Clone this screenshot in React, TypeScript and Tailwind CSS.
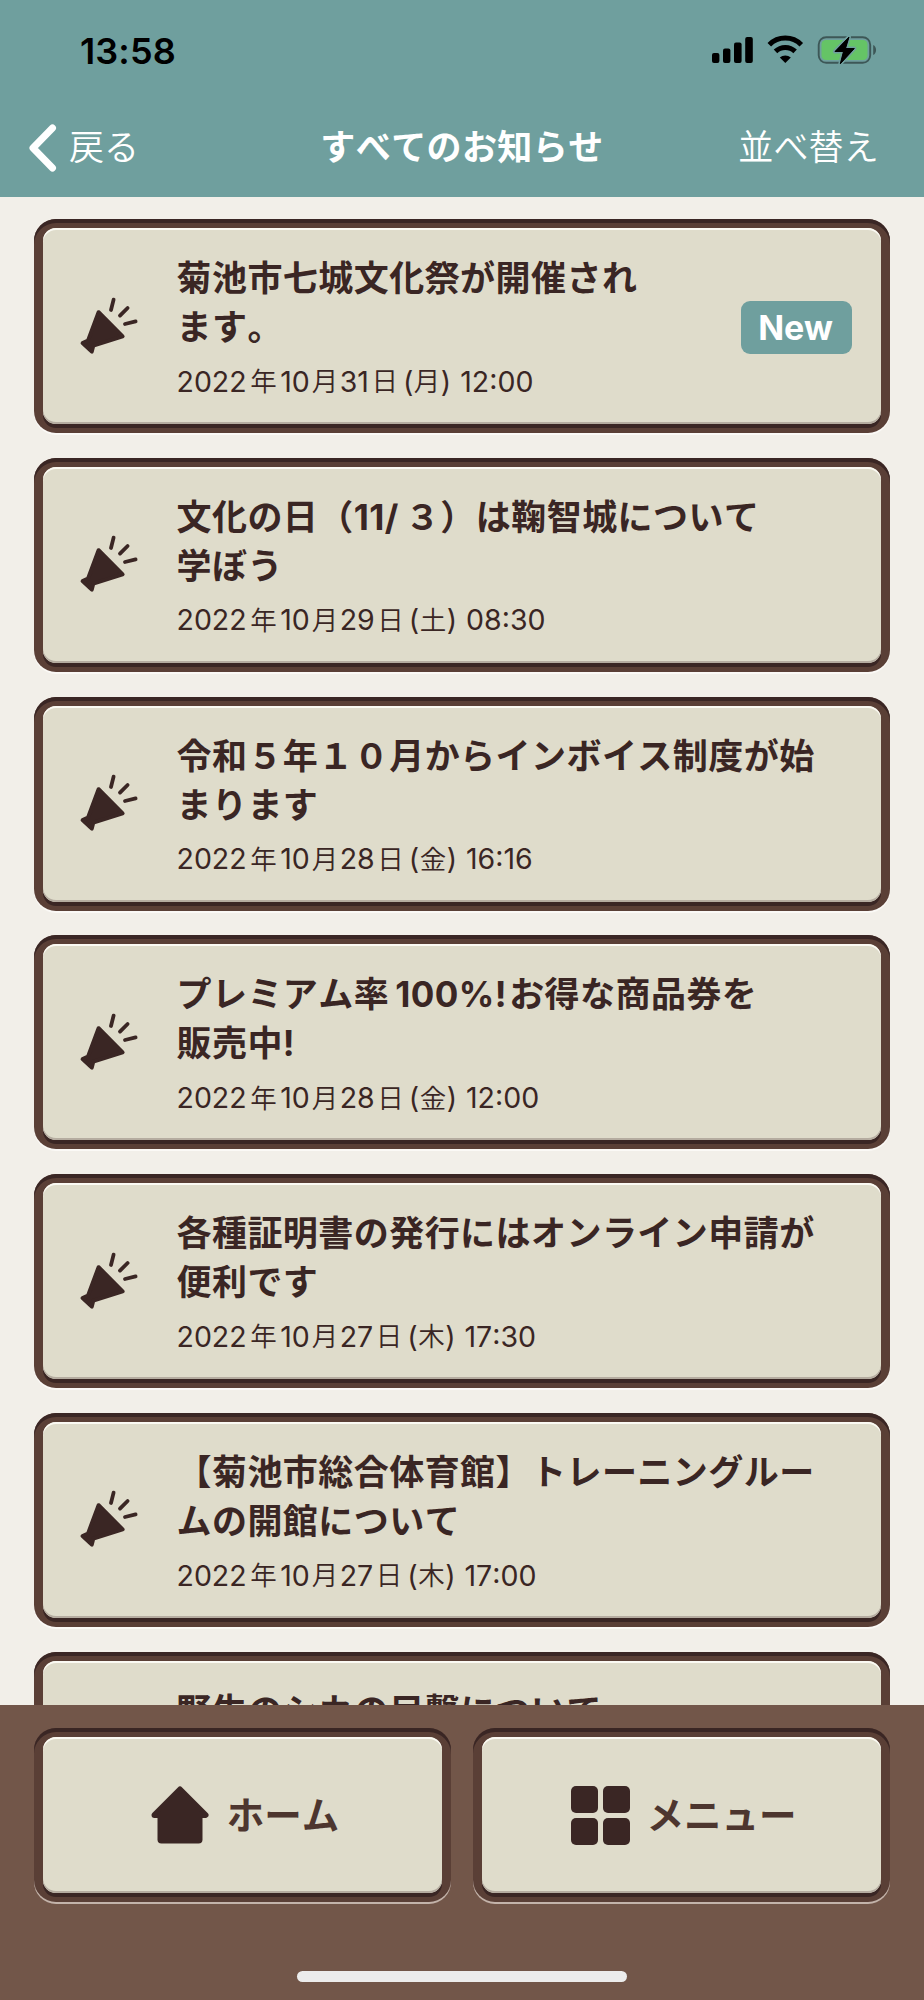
import React from 'react';

interface Notice {
  id: number;
  lines: React.ReactNode[];
  day: string;
  weekday: string;
  time: string;
  isNew?: boolean;
}

const notices: Notice[] = [
  { id: 1, lines: ['菊池市七城文化祭が開催され', 'ます。'], day: '31', weekday: '月', time: '12:00', isNew: true },
  {
    id: 2,
    lines: [<>文化の日（11/<span className="ml-[6px]">３</span>）は鞠智城について</>, '学ぼう'],
    day: '29',
    weekday: '土',
    time: '08:30',
  },
  { id: 3, lines: ['令和５年１０月からインボイス制度が始', 'まります'], day: '28', weekday: '金', time: '16:16' },
  {
    id: 4,
    lines: [<>プレミアム率<span className="mr-[2px] ml-[6px]">100%!</span>お得な商品券を</>, '販売中!'],
    day: '28',
    weekday: '金',
    time: '12:00',
  },
  { id: 5, lines: ['各種証明書の発行にはオンライン申請が', '便利です'], day: '27', weekday: '木', time: '17:30' },
  { id: 6, lines: ['【菊池市総合体育館】トレーニングルー', 'ムの開館について'], day: '27', weekday: '木', time: '17:00' },
  { id: 7, lines: ['野生のシカの目撃について'], day: '26', weekday: '水', time: '12:00' },
];

const StatusBar: React.FC = () => (
  <div className="flex h-[100px] items-center justify-between pr-[46px] pl-[80px] text-black">
    <span className="mt-[2px] text-[36px] leading-none font-semibold tracking-[0.1px]">13:58</span>
    <svg width="167" height="30" viewBox="0 0 167 30">
      <rect x="1" y="18" width="7.4" height="10" rx="2" />
      <rect x="12" y="13.5" width="7.4" height="14.5" rx="2" />
      <rect x="23" y="7.5" width="7.6" height="20.5" rx="2" />
      <rect x="34.2" y="2" width="7.6" height="26" rx="2" />
      <g fill="none" stroke="#000" strokeWidth="5">
        <path d="M58.3 9.8 A22.5 22.5 0 0 1 90.3 9.8" />
        <path d="M64.5 16.4 A14 14 0 0 1 84.1 16.4" />
      </g>
      <path d="M74.3 28 L68.8 22.6 A8 8 0 0 1 79.8 22.6 Z" />
      <rect x="107.7" y="2.2" width="51.5" height="25.6" rx="7.5" fill="none" stroke="#000" strokeOpacity="0.45" strokeWidth="1.9" />
      <path d="M162.2 10 C166 11.5 166 18.5 162.2 20 Z" fillOpacity="0.45" />
      <rect x="110.5" y="5" width="46" height="20" rx="4.5" fill="#65c466" />
      <path
        d="M138 2 L124 16.5 H132.5 L129.3 28.8 L143.3 13.5 H134.5 Z"
        stroke="#6f9f9e"
        strokeWidth="4"
        strokeLinejoin="round"
        paintOrder="stroke"
      />
      <path d="M138 2 L124 16.5 H132.5 L129.3 28.8 L143.3 13.5 H134.5 Z" stroke="#000" strokeWidth="1" strokeLinejoin="round" />
    </svg>
  </div>
);

const MegaphoneIcon: React.FC = () => (
  <svg width="60" height="60" viewBox="0 0 60 60" fill="#3a2624" stroke="#3a2624" strokeLinecap="round" strokeLinejoin="round">
    <path d="M19.6 15.2 L43.6 39.4 L14.3 48.6 L12.8 54.6 L3.6 46 L9 43.6 Z" strokeWidth="4" />
    <g strokeWidth="3.8" fill="none">
      <path d="M32 13 L34.6 2.6" />
      <path d="M41 18.6 L48.6 11" />
      <path d="M46 27 L56.6 24.4" />
    </g>
  </svg>
);

interface PanelProps {
  className?: string;
  rim: string;
  children: React.ReactNode;
}

const Panel: React.FC<PanelProps> = ({ className = '', rim, children }) => (
  <div className={`rounded-[22px] bg-[#5a3f36] p-[9px] ${rim} ${className}`}>
    <div className="flex h-full items-center rounded-[13px] bg-[#dfdccb] shadow-[inset_0_2px_0_#fbfaf3,inset_0_-2px_0_#b5aca0,0_4px_0_#3a2624]">
      {children}
    </div>
  </div>
);

const NoticeDate: React.FC<{ notice: Notice }> = ({ notice }) => (
  <p className="flex h-[60px] items-center text-[28.5px] font-normal text-[#3a2624] [font-kerning:none]">
    <span>2022</span>
    <span className="mr-[3.5px] ml-[3.5px] text-[26.5px] font-[350]">年</span>
    <span>10</span>
    <span className="mr-[1.5px] ml-[2px] text-[26.5px] font-[350]">月</span>
    <span>{notice.day}</span>
    <span className="mr-[5px] ml-[2.5px] text-[26.5px] font-[350]">日</span>
    <span>(</span>
    <span className="mx-[0.5px] text-[26.5px] font-[350]">{notice.weekday}</span>
    <span className="mr-[9px]">)</span>
    <span>{notice.time}</span>
  </p>
);

const NoticeCard: React.FC<{ notice: Notice }> = ({ notice }) => (
  <Panel className="h-[214px] shrink-0" rim="shadow-[inset_0_4px_0_#3a2624,0_2px_0_#fbf9f6]">
    <div className="mt-[1px] ml-[36px] w-[97.5px] shrink-0">
      <MegaphoneIcon />
    </div>
    <div className="h-[144px] flex-1 whitespace-nowrap">
      {notice.lines.map((line, i) => (
        <p key={i} className="h-[49px] text-[35px] leading-[49px] font-bold tracking-[0.45px] text-[#3a2624] [font-kerning:none]">
          {line}
        </p>
      ))}
      <NoticeDate notice={notice} />
    </div>
    {notice.isNew && (
      <span className="mt-[2px] mr-[29px] flex h-[53px] w-[111px] items-center justify-center rounded-[9px] bg-[#6f9f9e] pr-[2px] text-[34px] font-bold text-white">
        New
      </span>
    )}
  </Panel>
);

const HomeIcon: React.FC = () => (
  <svg width="60" height="60" viewBox="0 0 60 60" fill="#3a2624">
    <path
      d="M30 4.5 L55.5 30 H4.5 Z"
      stroke="#3a2624"
      strokeWidth="6"
      strokeLinejoin="round"
    />
    <rect x="7.5" y="26" width="45" height="32.5" rx="4" />
  </svg>
);

const MenuIcon: React.FC = () => (
  <div className="grid grid-cols-2 gap-[5px]">
    {[0, 1, 2, 3].map((i) => (
      <span key={i} className="size-[27px] rounded-[5px] bg-[#3a2624]" />
    ))}
  </div>
);

export default function App() {
  return (
    <div className="flex h-[2000px] w-[924px] flex-col overflow-hidden bg-[#f2efe9] font-[Inter,'Noto_Sans_CJK_JP',sans-serif]">
      <header className="h-[197px] shrink-0 bg-[#6f9f9e] text-white">
        <StatusBar />
        <nav className="grid h-[95px] grid-cols-3 items-center pr-[45px] pl-[29px] text-[35px] whitespace-nowrap [font-kerning:none]">
          <button className="flex items-center gap-[12px] font-[350]">
            <svg width="28" height="48" viewBox="0 0 28 48" fill="none" stroke="#fff" strokeWidth="7" strokeLinecap="round" strokeLinejoin="round">
              <path d="M23.5 4 L4 24 L23.5 44" />
            </svg>
            戻る
          </button>
          <h1 className="ml-[8px] text-center font-bold tracking-[0.4px]">すべてのお知らせ</h1>
          <button className="text-right font-[350] tracking-[0.2px]">並べ替え</button>
        </nav>
      </header>

      <main className="flex min-h-0 flex-1 flex-col gap-[24.8px] overflow-hidden px-[34px] pt-[22px]">
        {notices.map((notice) => (
          <NoticeCard key={notice.id} notice={notice} />
        ))}
      </main>

      <footer className="flex h-[295px] shrink-0 flex-col items-center bg-[#725649] px-[34px] pt-[23px]">
        <div className="grid w-full grid-cols-2 gap-[22px]">
          <Panel className="h-[174px]" rim="shadow-[inset_0_4px_0_#3a2624,0_2px_0_#c3b3aa]">
            <button className="flex w-full items-center justify-center gap-[17px] pl-[4px] text-[37.5px] font-bold text-[#4d362f] [font-kerning:none]">
              <HomeIcon />
              <span className="mt-[3px]">ホーム</span>
            </button>
          </Panel>
          <Panel className="h-[174px]" rim="shadow-[inset_0_4px_0_#3a2624,0_2px_0_#c3b3aa]">
            <button className="flex w-full items-center justify-center gap-[17px] pl-[4px] text-[37.5px] font-bold text-[#4d362f] [font-kerning:none]">
              <MenuIcon />
              <span className="mt-[3px]">メニュー</span>
            </button>
          </Panel>
        </div>
        <div className="mt-[69px] h-[11px] w-[330px] rounded-full bg-[#ececec]" />
      </footer>
    </div>
  );
}
